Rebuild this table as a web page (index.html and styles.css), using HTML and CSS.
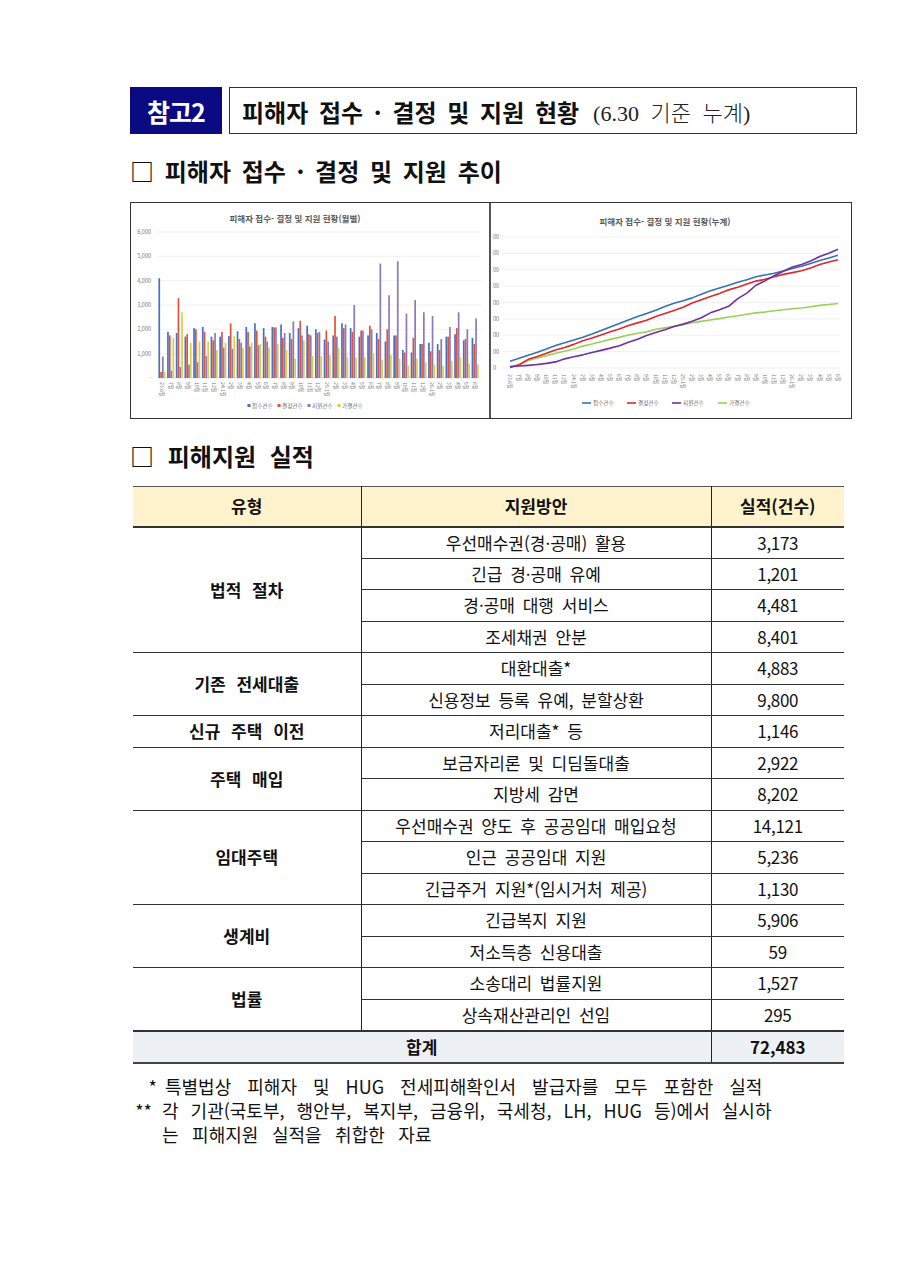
FILE: index.html
```html
<!DOCTYPE html>
<html lang="ko">
<head>
<meta charset="utf-8">
<title>피해자 접수 · 결정 및 지원 현황</title>
<link rel="stylesheet" href="styles.css">
</head>
<body>
<div class="page">
  <div class="title-row">
    <div class="tag">참고2</div>
    <div class="title-box"><span class="title-main">피해자 접수 · 결정 및 지원 현황</span><span class="title-sub">(6.30 기준 누계)</span></div>
  </div>

  <h2 class="sec">□ 피해자 접수 · 결정 및 지원 추이</h2>

  <div class="charts">
    <svg id="bar" class="chart" viewBox="0 0 358 215" width="358" height="215"></svg>
    <svg id="line" class="chart" viewBox="0 0 360 215" width="360" height="215"></svg>
  </div>

  <h2 class="sec sec2">□ 피해지원 실적</h2>

  <table class="perf">
    <colgroup><col class="c1"><col class="c2"><col class="c3"></colgroup>
    <thead>
      <tr><th>유형</th><th>지원방안</th><th>실적(건수)</th></tr>
    </thead>
    <tbody>
      <tr class="gs"><td rowspan="4" class="type">법적 절차</td><td>우선매수권(경·공매) 활용</td><td class="num">3,173</td></tr>
      <tr><td>긴급 경·공매 유예</td><td class="num">1,201</td></tr>
      <tr><td>경·공매 대행 서비스</td><td class="num">4,481</td></tr>
      <tr><td>조세채권 안분</td><td class="num">8,401</td></tr>
      <tr class="gs"><td rowspan="2" class="type">기존 전세대출</td><td>대환대출*</td><td class="num">4,883</td></tr>
      <tr><td>신용정보 등록 유예, 분할상환</td><td class="num">9,800</td></tr>
      <tr class="gs"><td class="type">신규 주택 이전</td><td>저리대출* 등</td><td class="num">1,146</td></tr>
      <tr class="gs"><td rowspan="2" class="type">주택 매입</td><td>보금자리론 및 디딤돌대출</td><td class="num">2,922</td></tr>
      <tr><td>지방세 감면</td><td class="num">8,202</td></tr>
      <tr class="gs"><td rowspan="3" class="type">임대주택</td><td>우선매수권 양도 후 공공임대 매입요청</td><td class="num">14,121</td></tr>
      <tr><td>인근 공공임대 지원</td><td class="num">5,236</td></tr>
      <tr><td>긴급주거 지원*(임시거처 제공)</td><td class="num">1,130</td></tr>
      <tr class="gs"><td rowspan="2" class="type">생계비</td><td>긴급복지 지원</td><td class="num">5,906</td></tr>
      <tr><td>저소득층 신용대출</td><td class="num">59</td></tr>
      <tr class="gs"><td rowspan="2" class="type">법률</td><td>소송대리 법률지원</td><td class="num">1,527</td></tr>
      <tr><td>상속재산관리인 선임</td><td class="num">295</td></tr>
    </tbody>
    <tfoot>
      <tr><td colspan="2">합계</td><td>72,483</td></tr>
    </tfoot>
  </table>

  <div class="notes">
    <div class="note"><span class="mk mk1">*</span><span class="nt nt1">특별법상 피해자 및 HUG 전세피해확인서 발급자를 모두 포함한 실적</span></div>
    <div class="note"><span class="mk mk2">**</span><span class="nt"><span class="nl2">각 기관(국토부, 행안부, 복지부, 금융위, 국세청, LH, HUG 등)에서 실시하</span><br><span class="nl3">는 피해지원 실적을 취합한 자료</span></span></div>
  </div>
</div>
<script src="script.js"></script>
</body>
</html>
```

FILE: styles.css
```css
* { box-sizing: border-box; }

body {
  margin: 0;
  background: #fff;
  color: #111;
  font-family: "Noto Sans CJK KR", "Noto Sans", sans-serif;
}

.page {
  width: 900px;
  padding: 87px 0 40px 130px;
}

/* title */
.title-row {
  display: flex;
  gap: 7px;
  width: 727px;
  height: 47px;
}

.tag {
  width: 92px;
  background: #0a0a82;
  color: #fff;
  font-size: 25px;
  font-weight: 700;
  letter-spacing: -1px;
  display: flex;
  align-items: center;
  justify-content: center;
}

.title-box {
  flex: 1;
  border: 1px solid #333;
  display: flex;
  align-items: center;
  padding-left: 12px;
  padding-top: 1px;
}

.title-main {
  font-size: 24px;
  font-weight: 700;
  letter-spacing: 0;
  word-spacing: 4px;
}

.title-sub {
  margin-left: 14px;
  font-family: "Liberation Serif", "Noto Sans CJK KR", serif;
  font-size: 22px;
  font-weight: 300;
  color: #222;
  word-spacing: 6px;
}

/* section headings */
.sec {
  margin: 22px 0 16px;
  font-size: 24px;
  line-height: 30px;
  font-weight: 700;
  letter-spacing: 0;
  word-spacing: 4px;
}

.sec2 {
  margin: 22px 0 15px;
  word-spacing: 7px;
}

/* charts */
.charts {
  width: 722px;
  height: 217px;
  border: 1px solid #333;
  background: #555;
  display: grid;
  grid-template-columns: 358px 360px;
  column-gap: 2px;
}

.chart {
  display: block;
  background: #fff;
}

.ctitle {
  font-size: 8.5px;
  font-weight: 700;
  fill: #595959;
}

.ylab {
  font-size: 5.5px;
  fill: #7a7a7a;
}

.xlab {
  font-size: 5.2px;
  fill: #7a7a7a;
}

.leg {
  font-size: 5.6px;
  fill: #6a6a6a;
}

.grid {
  stroke: #e4e4e4;
  stroke-width: 0.6;
}

.axis {
  stroke: #d0d0d0;
  stroke-width: 0.6;
}

.series {
  fill: none;
  stroke-width: 1.6;
  stroke-linejoin: round;
}

/* table */
.perf {
  margin-left: 3px;
  width: 711px;
  border-collapse: collapse;
  table-layout: fixed;
  font-size: 17px;
  word-spacing: 3px;
}

.c1 { width: 228px; }
.c2 { width: 350px; }
.c3 { width: 133px; }

.perf th,
.perf td {
  padding: 0;
  text-align: center;
  vertical-align: middle;
  border-top: 1px solid #333;
  border-bottom: 1px solid #333;
  border-left: 1px solid #222;
  border-right: 1px solid #222;
  line-height: 20px;
}

.perf th:first-child,
.perf td:first-child { border-left: none; }

.perf th:last-child,
.perf td:last-child { border-right: none; }

.perf thead tr { height: 40px; }

.perf th {
  background: #fef3cd;
  font-weight: 700;
  border-top: 1px solid #555;
  border-bottom: 2px solid #333;
}

.perf tbody tr { height: 31.5px; }

.perf .type {
  font-weight: 700;
  word-spacing: 6px;
}

.perf .num {
  letter-spacing: -0.3px;
}

.perf tfoot tr { height: 32px; }

.perf tfoot td {
  background: #edf0f4;
  font-weight: 700;
  border-top: 2px solid #333;
  border-bottom: 2px solid #444;
}

/* notes */
.notes {
  margin-top: 10px;
  font-size: 18px;
  line-height: 24px;
}

.note {
  display: flex;
}

.mk {
  flex: none;
  text-align: right;
}

.mk1 {
  width: 27px;
  margin-right: 8px;
}

.mk2 {
  width: 22px;
  margin-right: 10px;
}

.nt {
  white-space: nowrap;
}

.nt1 { word-spacing: 11px; }
.nl2 { word-spacing: 7px; }
.nl3 { word-spacing: 8.5px; }
```

FILE: script.js
```js
(function () {
  var NS = 'http://www.w3.org/2000/svg';
  function el(parent, tag, attrs, text) {
    var e = document.createElementNS(NS, tag);
    for (var k in attrs) e.setAttribute(k, attrs[k]);
    if (text != null) e.textContent = text;
    parent.appendChild(e);
    return e;
  }

  var blue = [4100,1900,1850,1700,2050,2100,1700,1700,1720,1920,2100,2250,2050,2100,2200,1850,2050,2150,2000,1580,1750,2250,2050,1700,1750,1850,1500,1750,1150,1050,1400,1450,1400,1700,1800,1550,1650];
  var red = [250,1750,3280,1800,2000,1900,1550,1900,2250,1600,1900,1950,1700,2080,1650,1600,2350,1800,1850,1950,2550,2050,1900,1950,2150,1600,2000,1750,1050,1650,1400,1100,1150,1700,2050,1600,1400];
  var purple = [880,300,450,550,650,900,1850,1250,1200,1450,1300,1350,1500,2080,1850,2330,1750,1750,1900,1500,1700,2200,3000,1950,2000,4700,3400,4800,2650,3200,2700,2550,1600,2100,2700,2000,2450];
  var yellow = [250,1650,2700,1450,1500,1500,1150,1450,1720,1250,1450,1400,1250,1400,1150,800,1550,900,900,950,1250,850,850,850,1000,750,950,800,500,800,650,550,500,700,850,600,550];

  var labels = blue.map(function (_, i) {
    var m = (5 + i) % 12 + 1;
    var y = 23 + Math.floor((5 + i) / 12);
    return (i === 0 || m === 1) ? (y + '.' + m + '월') : (m + '월');
  });

  function fmt(v) { return v.toLocaleString('en-US'); }

  /* ---------- monthly bar chart ---------- */
  var bar = document.getElementById('bar');
  el(bar, 'text', { x: 164, y: 19, 'class': 'ctitle', 'text-anchor': 'middle' }, '피해자 접수- 결정 및 지원 현황(월별)');
  var y0 = 175, unit = 24.33 / 1000;
  for (var v = 0; v <= 6000; v += 1000) {
    var gy = y0 - v * unit;
    if (v > 0) el(bar, 'line', { x1: 26, x2: 350, y1: gy, y2: gy, 'class': 'grid' });
    el(bar, 'text', { x: 20, y: gy + 2, 'class': 'ylab', 'text-anchor': 'end' }, v === 0 ? '-' : fmt(v));
  }
  el(bar, 'line', { x1: 26, x2: 350, y1: y0, y2: y0, 'class': 'axis' });

  var barSeries = [[blue, '#4472c4'], [red, '#e0533a'], [purple, '#8a7ab8'], [yellow, '#d9cf45']];
  labels.forEach(function (lab, i) {
    var cx = 31 + i * 8.7;
    barSeries.forEach(function (s, k) {
      var h = s[0][i] * unit;
      el(bar, 'rect', { x: (cx - 3.6 + k * 1.8).toFixed(2), y: (y0 - h).toFixed(2), width: 1.7, height: h.toFixed(2), fill: s[1] });
    });
    el(bar, 'text', { x: 0, y: 0, transform: 'translate(' + (cx - 2.2).toFixed(2) + ',' + (y0 + 4) + ') rotate(90)', 'class': 'xlab' }, lab);
  });

  var barLeg = [['접수건수', '#4472c4', 121], ['결정건수', '#e0533a', 151], ['지원건수', '#8a7ab8', 181], ['가결건수', '#d9cf45', 211]];
  barLeg.forEach(function (l) {
    el(bar, 'rect', { x: l[2] - 4.5, y: 201, width: 3, height: 3, fill: l[1] });
    el(bar, 'text', { x: l[2], y: 204.5, 'class': 'leg' }, l[0]);
  });

  /* ---------- cumulative line chart ---------- */
  var line = document.getElementById('line');
  el(line, 'text', { x: 174, y: 22, 'class': 'ctitle', 'text-anchor': 'middle' }, '피해자 접수- 결정 및 지원 현황(누계)');
  var base = 165, step = 16.375;
  for (var k = 0; k <= 8; k++) {
    var ly = base - k * step;
    el(line, 'line', { x1: 12, x2: 349, y1: ly, y2: ly, 'class': 'grid' });
    /* the source picture is cropped at its left edge: only the last digits of each axis label show */
    el(line, 'text', { x: 2, y: ly + 2, 'class': 'ylab' }, k === 0 ? '0' : '00');
  }

  function cum(arr) { var s = 0; return arr.map(function (x) { s += x; return s; }); }
  var lineSeries = [[cum(yellow), '#9bcf5a'], [cum(blue), '#2e75b6'], [cum(red), '#e3262b'], [cum(purple), '#7030a0']];
  lineSeries.forEach(function (s) {
    var pts = s[0].map(function (c, i) {
      var x = 19 + i * 9.11;
      var y = base - c / 10000 * step;
      return x.toFixed(2) + ',' + y.toFixed(2);
    }).join(' ');
    el(line, 'polyline', { points: pts, stroke: s[1], 'class': 'series' });
  });

  labels.forEach(function (lab, i) {
    var x = 19 + i * 9.11;
    el(line, 'text', { x: 0, y: 0, transform: 'translate(' + (x - 2.2).toFixed(2) + ',' + (base + 6) + ') rotate(90)', 'class': 'xlab' }, lab);
  });

  var lineLeg = [['접수건수', '#2e75b6', 91], ['결정건수', '#e3262b', 136], ['지원건수', '#7030a0', 181], ['가결건수', '#9bcf5a', 227]];
  lineLeg.forEach(function (l) {
    el(line, 'line', { x1: l[2], x2: l[2] + 9, y1: 200, y2: 200, stroke: l[1], 'stroke-width': 1.6 });
    el(line, 'text', { x: l[2] + 11, y: 202, 'class': 'leg' }, l[0]);
  });
})();
```
